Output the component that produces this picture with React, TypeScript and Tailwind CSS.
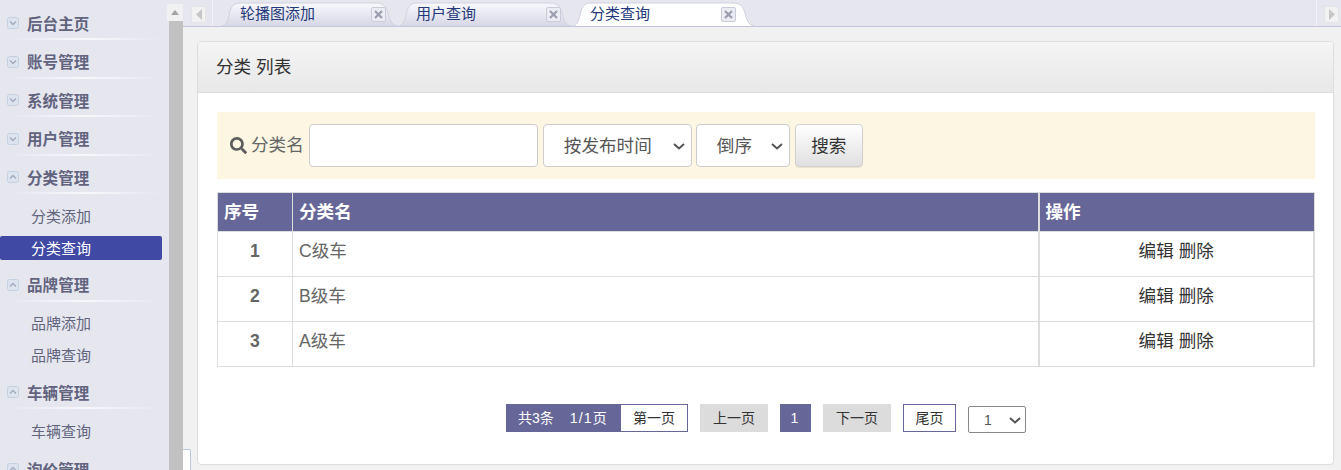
import React from "react";
import { FaSearch } from "react-icons/fa";

const FONT = { fontFamily: '"Liberation Sans", "Noto Sans CJK SC", sans-serif' };

const groups: { title: string; open?: boolean; items?: { label: string; active?: boolean }[] }[] = [
  { title: "后台主页" },
  { title: "账号管理" },
  { title: "系统管理" },
  { title: "用户管理" },
  { title: "分类管理", open: true, items: [{ label: "分类添加" }, { label: "分类查询", active: true }] },
  { title: "品牌管理", open: true, items: [{ label: "品牌添加" }, { label: "品牌查询" }] },
  { title: "车辆管理", open: true, items: [{ label: "车辆查询" }] },
  { title: "询价管理", open: true },
];

function ToggleIcon({ open }: { open?: boolean }) {
  return (
    <svg width="12" height="12" viewBox="0 0 12 12" className="shrink-0 mt-[-3px]">
      <rect x="0.5" y="0.5" width="11" height="11" rx="2" fill="#dde4ef" stroke="#c3d0e2" />
      <path d={open ? "M3 7.5 L6 4.5 L9 7.5" : "M3 4.5 L6 7.5 L9 4.5"} fill="none" stroke="#9fabc0" strokeWidth="1.4" />
    </svg>
  );
}

function Sidebar() {
  return (
    <aside className="w-[167px] shrink-0 h-[470px] overflow-hidden bg-[#e6e7ee] pt-[1.5px]">
      {groups.map((g) => (
        <div key={g.title}>
          <div className="mt-[3.5px] h-[35px] relative flex items-center pl-[7px] pr-[5px] gap-[8px] pt-[4px]">
            <ToggleIcon open={g.open} />
            <span className="text-[15.5px] font-bold text-[#62637f] tracking-[0.1px]">{g.title}</span>
            <div className="absolute left-[7px] right-[5px] bottom-0 h-[2px] bg-gradient-to-r from-[#e6e7ee] via-[#f8f8fb] to-[#e6e7ee]" />
          </div>
          {g.items && (
            <div className={g.title === "车辆管理" ? "pt-[6.5px]" : "pt-[6.5px] mb-[-1.5px]"}>
              {g.items.map((it) => (
                <div key={it.label} className="h-[32px] flex items-center">
                  <div
                    className={
                      it.active
                        ? "w-[162px] h-[24px] mb-[1px] rounded-[2px] bg-[#404aa5] text-white pl-[31px] text-[15px] leading-[25px]"
                        : "w-[162px] h-[24px] pl-[31px] text-[15px] leading-[24px] text-[#62647f]"
                    }
                  >
                    {it.label}
                  </div>
                </div>
              ))}
            </div>
          )}
        </div>
      ))}
    </aside>
  );
}

function Scrollbar() {
  return (
    <div className="w-[16px] shrink-0 h-[470px] flex flex-col bg-[#e6e7ee]">
      <div className="h-[17px] mt-[4px] bg-[#f1f1f1] flex items-center justify-center">
        <svg width="8" height="5" viewBox="0 0 8 5">
          <path d="M0 5 L4 0 L8 5 Z" fill="#a3a3a3" />
        </svg>
      </div>
      <div className="flex-1 ml-[2px] bg-[#c1c1c1]" />
    </div>
  );
}

function TabShape({ width, active }: { width: number; active?: boolean }) {
  const h = 24;
  const d = `M0 ${h} C5 ${h} 7 ${h - 5} 9 9 C11 3 14 1 19 1 L${width - 22} 1 C${width - 15} 1 ${width - 12} 4 ${width - 10} 11 C${width - 8} ${h - 4} ${width - 5} ${h} ${width} ${h}`;
  const id = `tab-${width}-${active ? "a" : "n"}`;
  return (
    <svg width={width} height={h + 1} viewBox={`0 0 ${width} ${h + 1}`} className="absolute left-0 top-0">
      <defs>
        <linearGradient id={id} x1="0" y1="0" x2="0" y2="1">
          <stop offset="0" stopColor={active ? "#ffffff" : "#f9f9fc"} />
          <stop offset="1" stopColor={active ? "#ffffff" : "#d6d7e5"} />
        </linearGradient>
      </defs>
      <path d={d + " Z"} fill={`url(#${id})`} />
      <path d={d} fill="none" stroke="#d0d1e0" />
    </svg>
  );
}

function Tab({ label, width, textAt, closeAt, active }: { label: string; width: number; textAt: number; closeAt: number; active?: boolean }) {
  return (
    <div className={active ? "relative h-[25px] z-10" : "relative h-[25px]"} style={{ width }}>
      <TabShape width={width} active={active} />
      <span className="absolute top-[1px] text-[15px] leading-[22px] text-[#23397b] whitespace-nowrap" style={{ left: textAt }}>{label}</span>
      <span
        className="absolute top-[5px] w-[15px] h-[15px] rounded-[2px] border border-[#c9cbdb] bg-[#ecedf4] flex items-center justify-center"
        style={{ left: closeAt }}
      >
        <svg width="9" height="9" viewBox="0 0 9 9">
          <path d="M1 1 L8 8 M8 1 L1 8" stroke="#9a9cb0" strokeWidth="2.2" />
        </svg>
      </span>
    </div>
  );
}

function ArrowButton({ dir }: { dir: "l" | "r" }) {
  return (
    <div className="w-[15px] h-[17px] rounded-[2px] bg-[#f2f2f2] border border-[#e4e4e4] flex items-center justify-center">
      <svg width="6" height="11" viewBox="0 0 6 11">
        <path d={dir === "l" ? "M6 0 L0 5.5 L6 11 Z" : "M0 0 L6 5.5 L0 11 Z"} fill="#c6c6c6" />
      </svg>
    </div>
  );
}

function TabBar() {
  return (
    <div className="h-[27px] shrink-0 bg-[#e6e7ee] border-b border-[#c5c5de] flex items-start">
      <div className="w-[30px] h-[26px] pl-[8px] pt-[6px] shrink-0 border-r border-[#f1f1f6]">
        <ArrowButton dir="l" />
      </div>
      <div className="flex-1 flex items-start pt-[2px] pl-[8px] min-w-0">
        <Tab label="轮播图添加" width={177} textAt={19} closeAt={150} />
        <Tab label="用户查询" width={174} textAt={18} closeAt={148} />
        <Tab label="分类查询" width={183} textAt={18} closeAt={149} active />
      </div>
      <div className="w-[25px] h-[26px] shrink-0 pt-[6px] pl-[7px] border-l border-[#f1f1f6]">
        <ArrowButton dir="r" />
      </div>
    </div>
  );
}

const rows = [
  { id: 1, name: "C级车" },
  { id: 2, name: "B级车" },
  { id: 3, name: "A级车" },
];

function Table() {
  return (
    <table className="w-[1098px] table-fixed border-collapse mt-[13px] text-[17.6px]">
      <colgroup>
        <col className="w-[75px]" />
        <col className="w-[746px]" />
        <col />
      </colgroup>
      <thead>
        <tr className="h-[39px] bg-[#676698] text-white font-bold text-left">
          <th className="border border-[#dddddd] px-[6px] font-bold">序号</th>
          <th className="border border-[#dddddd] px-[6px] font-bold">分类名</th>
          <th className="border border-[#dddddd] border-l-2 px-[6px] font-bold">操作</th>
        </tr>
      </thead>
      <tbody>
        {rows.map((r) => (
          <tr key={r.id} className="h-[45px] bg-white">
            <td className="border border-[#dddddd] text-center font-bold text-[#666666] pb-[6px]">{r.id}</td>
            <td className="border border-[#dddddd] px-[6px] text-[#666666] pb-[6px]">{r.name}</td>
            <td className="border border-[#dddddd] border-l-2 border-r-2 text-center text-[#333333] pb-[6px]">编辑 删除</td>
          </tr>
        ))}
      </tbody>
    </table>
  );
}

function Chevron({ className }: { className: string }) {
  return (
    <svg width="12" height="7" viewBox="0 0 12 7" className={className}>
      <path d="M1 1 L6 5.5 L11 1" fill="none" stroke="#555555" strokeWidth="2" />
    </svg>
  );
}

function SearchBar() {
  return (
    <div className="h-[67px] w-[1098px] bg-[#fdf6e3] flex items-center pl-[13px] mt-[19px]">
      <FaSearch className="text-[#5c5c5c] w-[17px] h-[17px]" />
      <span className="ml-[4px] text-[17.6px] text-[#666666]">分类名</span>
      <input className="ml-[5px] w-[229px] h-[43px] bg-white border border-[#cccccc] rounded-[4px] outline-none" />
      <div className="relative ml-[5px] w-[149px] h-[43px]">
        <select className="appearance-none w-full h-full bg-white border border-[#cccccc] rounded-[4px] pl-[20px] pt-[1px] text-[17.6px] text-[#555555] outline-none">
          <option>按发布时间</option>
        </select>
        <Chevron className="absolute right-[7px] top-[19px] pointer-events-none" />
      </div>
      <div className="relative ml-[4px] w-[94px] h-[43px]">
        <select className="appearance-none w-full h-full bg-white border border-[#cccccc] rounded-[4px] pl-[20px] pt-[1px] text-[17.6px] text-[#555555] outline-none">
          <option>倒序</option>
        </select>
        <Chevron className="absolute right-[7px] top-[19px] pointer-events-none" />
      </div>
      <button className="ml-[5px] w-[68px] h-[43px] pt-[1px] rounded-[4px] border border-[#d0d0d0] shadow-[0_1px_1px_rgba(0,0,0,0.08)] bg-gradient-to-b from-[#ffffff] to-[#e0e0e0] text-[17.6px] text-[#333333]">
        搜索
      </button>
    </div>
  );
}

function Pagination() {
  return (
    <div className="flex items-start justify-center mt-[37px] text-[14px] leading-none w-[1098px]">
      <div className="h-[28px] w-[114px] bg-[#676698] text-white flex items-center pl-[12px] whitespace-pre">
        <span>共3条</span>
        <span className="ml-[16px] tracking-[1.2px]">1/1页</span>
      </div>
      <div className="h-[28px] w-[68px] border border-[#676698] bg-white text-[#333333] flex items-center justify-center">第一页</div>
      <div className="h-[28px] w-[68px] ml-[12px] bg-[#dcdcdc] text-[#333333] flex items-center justify-center">上一页</div>
      <div className="h-[28px] w-[31px] ml-[12px] pr-[2px] bg-[#676698] text-white flex items-center justify-center">1</div>
      <div className="h-[28px] w-[68px] ml-[12px] bg-[#dcdcdc] text-[#333333] flex items-center justify-center">下一页</div>
      <div className="h-[28px] w-[53px] ml-[12px] border border-[#676698] bg-white text-[#333333] flex items-center justify-center">尾页</div>
      <div className="relative ml-[12px] mt-[2px] w-[58px] h-[27px]">
        <select className="appearance-none w-full h-full bg-white border border-[#888888] rounded-[2px] pl-[15px] text-[14px] text-[#555555] outline-none">
          <option>1</option>
        </select>
        <Chevron className="absolute right-[5px] top-[11px] pointer-events-none" />
      </div>
    </div>
  );
}

export default function App() {
  return (
    <div className="relative w-[1341px] h-[470px] overflow-hidden flex bg-[#f1f1f1]" style={FONT}>
      <Sidebar />
      <Scrollbar />
      <main className="flex-1 min-w-0 h-[470px] flex flex-col">
        <TabBar />
        <div className="flex-1 pt-[14px] pl-[14px] pr-[7px] pb-[5px] min-h-0">
          <section className="h-full bg-white border border-[#dddddd] rounded-[4px] overflow-hidden">
            <div className="h-[51px] bg-gradient-to-b from-[#f5f5f5] to-[#e8e8e8] border-b border-[#dddddd] flex items-center pl-[18px] text-[17.6px] text-[#333333]">
              分类 列表
            </div>
            <div className="pl-[19px]">
              <SearchBar />
              <Table />
              <Pagination />
            </div>
          </section>
        </div>
      </main>
      <div className="absolute left-[183px] top-[449px] w-[8px] h-[21px] bg-white border-t border-r border-[#bcc9e6] rounded-tr-[2px]" />
    </div>
  );
}
